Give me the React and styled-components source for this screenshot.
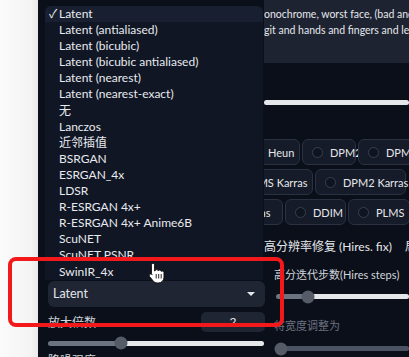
import React from 'react';
import styled, { createGlobalStyle } from 'styled-components';

const GlobalStyle = createGlobalStyle`
  html, body {
    margin: 0;
    padding: 0;
    background: #0b0f19;
    overflow: hidden;
  }
  * { box-sizing: border-box; }
`;

const Page = styled.div`
  position: relative;
  width: 409px;
  height: 357px;
  display: flex;
  overflow: hidden;
  font-family: Lato, "Noto Sans CJK SC", sans-serif;
  font-size: 12px;
  color: #e5e7eb;
  background: #0b0f19;
`;

const Side = styled.div`
  width: 38px;
  flex: none;
  background: linear-gradient(90deg, #fbfbfb 0%, #f4f4f4 80%, #e9e9e9 100%);
`;

const Main = styled.div`
  flex: 1;
  display: grid;
  grid-template-columns: 226px 1fr;
  min-width: 0;
`;

const LeftCol = styled.div`
  display: flex;
  flex-direction: column;
  padding-left: 7px;
  min-width: 0;
`;

const Menu = styled.ul`
  list-style: none;
  margin: 6px 0 1px 0;
  padding: 0;
  width: 218px;
  background: #101624;
  border-radius: 6px 6px 0 0;
`;

const Item = styled.li`
  height: 16.1px;
  line-height: 16px;
  padding-left: ${({ $selected }) => ($selected ? '4px' : '14px')};
  white-space: nowrap;
  background: ${({ $selected }) => ($selected ? '#181f30' : 'transparent')};
  border-radius: ${({ $selected }) => ($selected ? '6px 6px 0 0' : '0')};
  color: #e8eaef;
`;

const Check = styled.span`
  display: inline-block;
  width: 10px;
`;

const Select = styled.div`
  margin-left: 3px;
  width: 217px;
  height: 26px;
  border-radius: 6px;
  background: #1f2533;
  display: flex;
  align-items: center;
  justify-content: space-between;
  padding: 0 10px 0 5px;
  font-size: 12.5px;
`;

const Caret = styled.span`
  width: 0;
  height: 0;
  border-left: 4px solid transparent;
  border-right: 4px solid transparent;
  border-top: 4px solid #e5e7eb;
`;

const FieldRow = styled.div`
  margin: 5px 0 0 3px;
  width: 217px;
  display: flex;
  align-items: center;
  justify-content: space-between;
`;

const Label = styled.span`
  color: ${({ $dim }) => ($dim ? '#6b7280' : '#d1d5db')};
  font-size: ${({ $size }) => $size || 12}px;
  white-space: nowrap;
`;

const NumberBox = styled.div`
  width: 64px;
  height: 20px;
  border-radius: 5px;
  background: #1f2533;
  text-align: center;
  line-height: 20px;
  font-size: 12px;
`;

const SliderTrack = styled.div`
  position: relative;
  height: 5px;
  border-radius: 3px;
  margin: ${({ $m }) => $m || '0'};
  width: ${({ $w }) => $w || 'auto'};
  background: linear-gradient(
    90deg,
    #6b7280 0%,
    #6b7280 ${({ $pos }) => $pos}%,
    ${({ $rest }) => $rest} ${({ $pos }) => $pos}%,
    ${({ $rest }) => $rest} 100%
  );
`;

const Thumb = styled.span`
  position: absolute;
  top: 50%;
  width: 13px;
  height: 13px;
  border-radius: 50%;
  background: #555b67;
  transform: translate(-50%, -50%);
`;

const RightCol = styled.div`
  display: flex;
  flex-direction: column;
  overflow: hidden;
  min-width: 0;
`;

const Prompt = styled.div`
  height: 63px;
  background: #1d2331;
  padding: 6px 0 0 0;
  line-height: 16px;
  font-size: 10.5px;
  white-space: nowrap;
  overflow: hidden;
  color: #e5e7eb;
`;

const Radios = styled.div`
  display: flex;
  flex-direction: column;
  gap: 4px;
  margin-top: 34px;
`;

const RadioRow = styled.div`
  display: flex;
  gap: 2px;
  margin-left: ${({ $offset }) => $offset}px;
`;

const RadioBox = styled.div`
  flex: none;
  width: ${({ $w }) => $w}px;
  height: 26px;
  border-radius: 6px;
  background: #151b28;
  border: 1px solid #2a3140;
  display: flex;
  align-items: center;
  gap: 7px;
  padding-left: 9px;
  white-space: nowrap;
  font-size: 11px;
  color: #e5e7eb;
`;

const Circle = styled.span`
  flex: none;
  width: 11px;
  height: 11px;
  border-radius: 50%;
  border: 1px solid #374151;
  background: #0f1420;
`;

const SectionLabel = styled.div`
  display: flex;
  justify-content: space-between;
  margin-top: 12px;
  white-space: nowrap;
  font-size: 12px;
  color: #e5e7eb;
`;

const Hires = styled.div`
  padding-left: 10px;
  display: flex;
  flex-direction: column;
`;

const Highlight = styled.div`
  position: absolute;
  left: 8px;
  top: 257px;
  width: 276px;
  height: 70px;
  border: 4.5px solid #f3191b;
  border-radius: 8px;
  pointer-events: none;
`;

const Cursor = styled.svg`
  position: absolute;
  left: 148px;
  top: 262px;
`;

const options = [
  'Latent',
  'Latent (antialiased)',
  'Latent (bicubic)',
  'Latent (bicubic antialiased)',
  'Latent (nearest)',
  'Latent (nearest-exact)',
  '无',
  'Lanczos',
  '近邻插值',
  'BSRGAN',
  'ESRGAN_4x',
  'LDSR',
  'R-ESRGAN 4x+',
  'R-ESRGAN 4x+ Anime6B',
  'ScuNET',
  'ScuNET PSNR',
  'SwinIR_4x',
];

const rows = [
  { offset: -24, items: [['Heun', 60], ['DPM2', 54], ['DPM2 a', 70]] },
  { offset: -40, items: [['LMS Karras', 89], ['DPM2 Karras', 91]] },
  { offset: -95, items: [['DPM2 a Karras', 114], ['DDIM', 61], ['PLMS', 62]] },
];

export default function App() {
  return (
    <>
      <GlobalStyle />
      <Page>
        <Side />
        <Main>
          <LeftCol>
            <Menu>
              {options.map((o, i) => (
                <Item key={o} $selected={i === 0}>
                  {i === 0 && <Check>✓</Check>}
                  {o}
                </Item>
              ))}
            </Menu>
            <Select>
              Latent
              <Caret />
            </Select>
            <FieldRow>
              <Label>放大倍数</Label>
              <NumberBox>2</NumberBox>
            </FieldRow>
            <SliderTrack $pos={34} $rest="#e5e7eb" $w="216px" $m="9px 0 0 3px">
              <Thumb style={{ left: '34%' }} />
            </SliderTrack>
            <FieldRow>
              <Label>降噪强度</Label>
            </FieldRow>
          </LeftCol>
          <RightCol>
            <Prompt>
              onochrome, worst face, (bad and mutated hands:1.3)
              <br />
              git and hands and fingers and legs
            </Prompt>
            <SliderTrack $pos={0} $rest="#e5e7eb" $m="37px 0 0 0" />
            <Radios>
              {rows.map((r, i) => (
                <RadioRow key={i} $offset={r.offset}>
                  {r.items.map(([name, w]) => (
                    <RadioBox key={name} $w={w}>
                      <Circle />
                      {name}
                    </RadioBox>
                  ))}
                </RadioRow>
              ))}
            </Radios>
            <SectionLabel>
              <span>高分辨率修复 (Hires. fix)</span>
              <span style={{ marginRight: -8 }}>局</span>
            </SectionLabel>
            <Hires>
              <Label $size={11} style={{ marginTop: 12 }}>高分迭代步数(Hires steps)</Label>
              <SliderTrack $pos={24} $rest="#e5e7eb" $m="12px 0 0 2px">
                <Thumb style={{ left: '24%' }} />
              </SliderTrack>
              <Label $dim $size={11} style={{ marginTop: 18 }}>将宽度调整为</Label>
              <SliderTrack $pos={4} $rest="#4b5263" $m="13px 0 0 2px">
                <Thumb style={{ left: '4%' }} />
              </SliderTrack>
            </Hires>
          </RightCol>
        </Main>
        <Highlight />
        <Cursor width="18" height="22" viewBox="0 0 18 22">
          <path
            d="M5 1.5c1 0 1.6.7 1.6 1.6V9l.4-.1c.2-.8.9-1.3 1.6-1.3.8 0 1.4.5 1.6 1.2.3-.5.9-.8 1.5-.8.8 0 1.5.6 1.6 1.4.3-.3.7-.4 1.1-.4 1 0 1.6.8 1.6 1.7v4.5c0 3.3-2.5 5.8-5.7 5.8H9.2c-1.7 0-3-.7-4-2L1.6 14.6c-.6-.8-.4-1.8.4-2.3.7-.5 1.6-.3 2.2.3l-.8-.8V3.1C3.4 2.2 4 1.5 5 1.5z"
            fill="#fff"
            stroke="#111"
            strokeWidth="1"
          />
          <path d="M8.2 12v4.5M10.7 12v4.5M13.2 12v4.5" stroke="#111" strokeWidth="0.9" />
        </Cursor>
      </Page>
    </>
  );
}
